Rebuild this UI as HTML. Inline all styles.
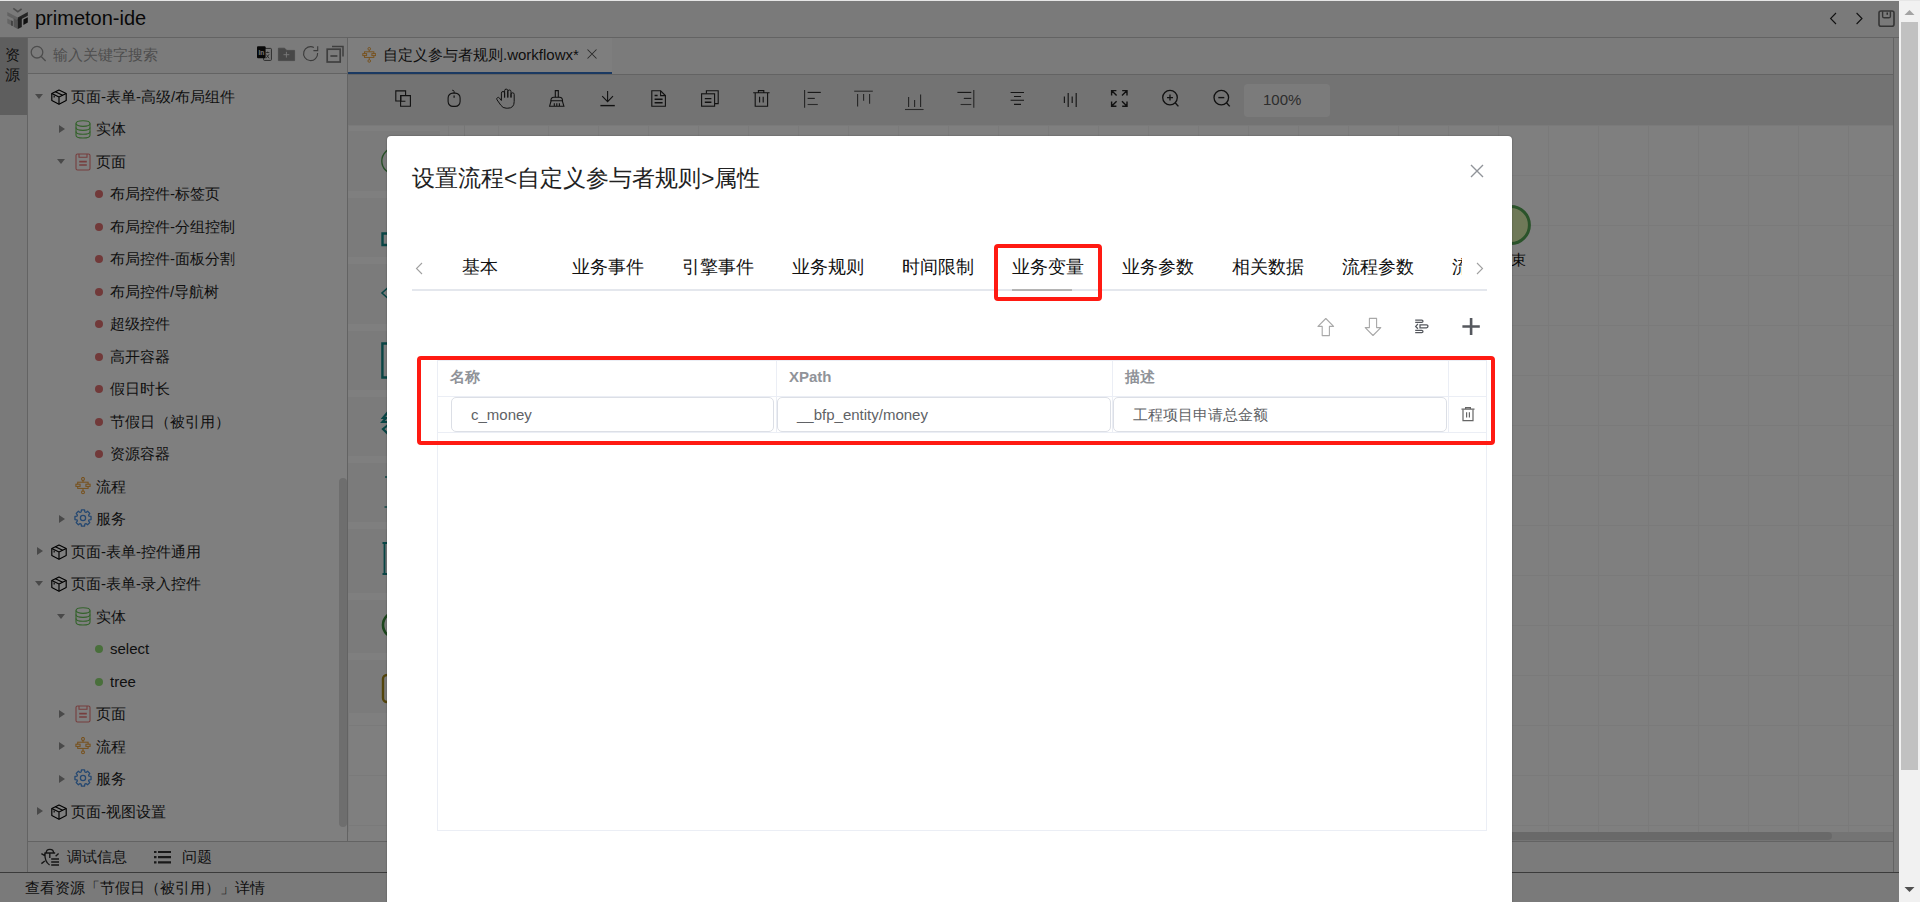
<!DOCTYPE html>
<html><head><meta charset="utf-8">
<style>
*{box-sizing:border-box}
html,body{margin:0;padding:0;width:1920px;height:902px;overflow:hidden;font-family:"Liberation Sans",sans-serif;background:#fff}
.a{position:absolute}
svg{display:block}
#app{position:absolute;left:0;top:0;width:1899px;height:902px;background:#fff;overflow:hidden}
#title{left:0;top:0;width:1899px;height:38px;background:#f4f4f4;border-bottom:1px solid #c6c6c6}
#act{left:0;top:38px;width:28px;height:834px;background:#f4f4f4;border-right:1px solid #c6c6c6}
#actsel{left:0;top:38px;width:27px;height:77px;background:#bdbdbd}
#side{left:28px;top:38px;width:320px;height:803px;background:#fff;border-right:1px solid #c6c6c6}
#search{left:28px;top:38px;width:319px;height:36px;background:#f7f7f7;border-bottom:1px solid #c6c6c6}
.tx{height:20px;font-size:15px;line-height:20px;color:#1e1e1e;white-space:nowrap}
.tri-d{width:0;height:0;border-left:4.5px solid transparent;border-right:4.5px solid transparent;border-top:5.5px solid #939393}
.tri-r{width:0;height:0;border-top:4.5px solid transparent;border-bottom:4.5px solid transparent;border-left:6.5px solid #939393}
.dot{width:8px;height:8px;border-radius:50%}
#sthumb{left:339px;top:478px;width:8px;height:349px;border-radius:4px;background:#dcdcdc}
#bottom{left:28px;top:841px;width:1865px;height:31px;background:#f6f6f6;border-top:1px solid #c6c6c6}
#status{left:0;top:872px;width:1899px;height:30px;background:#f4f4f4;border-top:1px solid #777}
#tabs{left:348px;top:38px;width:1545px;height:36px;background:#f6f6f6}
#tab1{left:348px;top:38px;width:264px;height:36px;background:#fdfdfd;border-bottom:2px solid #3472c4}
#tb{left:348px;top:75px;width:1545px;height:50px;background:#e6e6e6}
#canvas{left:348px;top:125px;width:1545px;height:707px;background:#fff;
 background-image:linear-gradient(#f5f5f5 1px,transparent 1px),linear-gradient(90deg,#f5f5f5 1px,transparent 1px);background-size:50px 50px}
#hscroll{left:390px;top:832px;width:1503px;height:9px;background:#e8e8e8}
#hthumb{left:400px;top:832px;width:1432px;height:8px;border-radius:4px;background:#d3d3d3}
#edgeR{left:1893px;top:38px;width:6px;height:834px;background:#f4f4f4;border-left:1px solid #c6c6c6}
#overlay{left:0;top:0;width:1899px;height:902px;background:rgba(0,0,0,.5)}
#vscroll{left:1899px;top:0;width:21px;height:902px;background:#f1f1f1}
#vthumb{left:1901px;top:22px;width:17px;height:748px;background:#c1c1c1}
#topline{left:0;top:0;width:1920px;height:1px;background:#e6e6e6}
#modal{left:387px;top:136px;width:1125px;height:800px;background:#fff;border-radius:4px;box-shadow:0 0 2px rgba(0,0,0,.35)}
.mt{font-size:22.5px;line-height:30px;color:#222;font-weight:300;white-space:nowrap}
.tab{font-size:17.5px;line-height:24px;color:#111;font-weight:300;white-space:nowrap}
.th{font-size:15px;font-weight:bold;color:#909399;line-height:20px;white-space:nowrap}
.inp{height:35px;border:1px solid #dcdfe6;border-radius:5px;background:#fff;font-size:15px;color:#606266;line-height:33px;padding-left:19px;white-space:nowrap}
.redbox{border:4.5px solid #ff1a12;border-radius:4px}
</style></head><body>
<div id="app">
  <div id="title" class="a"></div>
  <svg class="a" style="left:4px;top:5px" width="28" height="27" viewBox="4 5 28 27">
 <path d="M13.3 8.4L17.8 11.8L21.6 8.8" fill="none" stroke="#9a9a9a" stroke-width="1.7"/>
 <path d="M7.3 12L17.8 17.4V21L7.3 15.7Z" fill="#c4c4c4"/>
 <path d="M13.6 18.2L17.8 20.4V29L13.6 26.8Z" fill="#a8a8a8"/>
 <path d="M7.3 18.4L12.4 21V25.9L7.3 23.3Z" fill="#cacaca"/>
 <path d="M11.4 20.5L12.6 21.1V26L11.4 25.4Z" fill="#555"/>
 <path d="M17.8 17.4L27.8 12V15.7L17.8 21Z" fill="#4a4a4a"/>
 <path d="M17.8 19L21.8 17V27L17.8 29Z" fill="#3a3a3a"/>
 <path d="M23.4 19.6L27.8 17.3V22.6L23.4 24.9Z" fill="#1e1e1e"/>
</svg>
<div class="a" style="left:35px;top:6px;font-size:20px;line-height:24px;color:#111">primeton-ide</div>
<svg class="a" style="left:1829px;top:12px" width="9" height="13" viewBox="0 0 9 13"><path d="M7 1L1.6 6.5L7 12" fill="none" stroke="#222" stroke-width="1.1"/></svg>
<svg class="a" style="left:1855px;top:12px" width="9" height="13" viewBox="0 0 9 13"><path d="M1.6 1L7 6.5L1.6 12" fill="none" stroke="#222" stroke-width="1.1"/></svg>
<svg class="a" style="left:1877px;top:9px" width="19" height="19" viewBox="0 0 19 19"><rect x="2" y="2" width="15" height="15.2" rx="2" fill="none" stroke="#6a6a6a" stroke-width="1.6"/><path d="M5.6 2.2V7.2Q5.6 8.8 7.2 8.8H11.8Q13.4 8.8 13.4 7.2V2.2" fill="none" stroke="#6a6a6a" stroke-width="1.4"/><path d="M10.2 3.6V5.8" stroke="#333" stroke-width="1.2"/></svg>

  <div id="act" class="a"></div>
  <div id="actsel" class="a"></div>
  <div class="a tx" style="left:5px;top:45px;width:16px;line-height:20px;white-space:normal">资源</div>
  <div id="side" class="a"></div>
  <div id="search" class="a"></div>
  <svg class="a" style="left:30px;top:45px" width="17" height="18" viewBox="0 0 17 18"><circle cx="7" cy="7.2" r="5.8" fill="none" stroke="#9a9a9a" stroke-width="1.3"/><path d="M11.2 11.6L15.6 16" stroke="#9a9a9a" stroke-width="1.4"/></svg>
<div class="a tx" style="left:53px;top:45px;color:#9d9d9d">输入关键字搜索</div>
<svg class="a" style="left:252px;top:42px" width="96" height="24" viewBox="252 42 96 24" fill="none">
 <rect x="263.6" y="48.4" width="7.8" height="12" rx="0.8" fill="#f2f2f2" stroke="#555" stroke-width="1"/>
 <path d="M265.8 52.6H269.4M267.6 51.6V53M266 58.4L269.2 54.2M266.4 54.6L269.2 58.4" stroke="#555" stroke-width="0.9"/>
 <rect x="257" y="46.2" width="8.6" height="12" rx="1" fill="#111"/>
 <text x="258.4" y="55.2" font-size="6.6" font-weight="bold" fill="#e8e8e8" font-family="Liberation Sans">In</text>
 <path d="M278.4 48.2H284.6L286.8 50.4H294.6V60.6H278.4Z" fill="#8e8e8e" stroke="#8e8e8e" stroke-width="0.8" stroke-linejoin="round"/>
 <path d="M286.4 51.8V57.6M283.5 54.7H289.3" stroke="#f4f4f4" stroke-width="0.9"/>
 <path d="M317.6 53A7 7 0 1 1 313.9 47.4" stroke="#777" stroke-width="1.15"/>
 <path d="M317.7 46.2V50.6H313.4" stroke="#777" stroke-width="1.15"/>
 <rect x="327.2" y="49.2" width="13" height="12.8" stroke="#7e7e7e" stroke-width="1.7"/>
 <path d="M332 46.4H343V56.4" stroke="#7e7e7e" stroke-width="1.5"/>
 <path d="M330.4 56H337.4" stroke="#7e7e7e" stroke-width="1.7"/>
</svg>

  <div class="a tri-d" style="left:35px;top:93.5px"></div>
<div class="a" style="left:51px;top:88.5px;height:16px;line-height:0"><svg width="16" height="16" viewBox="0 0 16 16" fill="none" stroke="#000" stroke-width="1.15" stroke-linejoin="round"><path d="M8 1L15.2 4.5V11.6L8 15.2L0.8 11.6V4.5Z"/><path d="M0.8 4.5L8 8L15.2 4.5M8 8V15.2"/><path d="M4.4 2.7L11.6 6.3"/><path d="M3.2 6.6V8.6" stroke="#333" stroke-width="1.4"/></svg></div>
<div class="a tx" style="left:71px;top:86.5px">页面-表单-高级/布局组件</div>
<div class="a tri-r" style="left:59.0px;top:124.5px"></div>
<div class="a" style="left:75px;top:119.5px;height:19px;line-height:0"><svg width="16" height="19" viewBox="0 0 16 19" fill="none" stroke="#66c455" stroke-width="1.1"><ellipse cx="8" cy="3.6" rx="7" ry="2.8"/><path d="M1 3.6V15.2C1 16.8 4.1 18 8 18S15 16.8 15 15.2V3.6"/><path d="M1 7.6C1 9.2 4.1 10.4 8 10.4S15 9.2 15 7.6M1 11.4C1 13 4.1 14.2 8 14.2S15 13 15 11.4"/></svg></div>
<div class="a tx" style="left:96px;top:119.0px">实体</div>
<div class="a tri-d" style="left:57px;top:158.5px"></div>
<div class="a" style="left:75px;top:152.5px;height:18px;line-height:0"><svg width="16" height="18" viewBox="0 0 16 18" fill="none" stroke="#ec7b7b" stroke-width="1.1"><rect x="1" y="1" width="14" height="16" rx="1.5"/><path d="M4 1V4.2H12V1"/><path d="M4.2 8.6H11.8M4.2 12H11.8" stroke-width="1.6"/></svg></div>
<div class="a tx" style="left:96px;top:151.5px">页面</div>
<div class="a dot" style="left:95px;top:190.0px;background:#e27272"></div>
<div class="a tx" style="left:110px;top:184.0px">布局控件-标签页</div>
<div class="a dot" style="left:95px;top:222.5px;background:#e27272"></div>
<div class="a tx" style="left:110px;top:216.5px">布局控件-分组控制</div>
<div class="a dot" style="left:95px;top:255.0px;background:#e27272"></div>
<div class="a tx" style="left:110px;top:249.0px">布局控件-面板分割</div>
<div class="a dot" style="left:95px;top:287.5px;background:#e27272"></div>
<div class="a tx" style="left:110px;top:281.5px">布局控件/导航树</div>
<div class="a dot" style="left:95px;top:320.0px;background:#e27272"></div>
<div class="a tx" style="left:110px;top:314.0px">超级控件</div>
<div class="a dot" style="left:95px;top:352.5px;background:#e27272"></div>
<div class="a tx" style="left:110px;top:346.5px">高开容器</div>
<div class="a dot" style="left:95px;top:385.0px;background:#e27272"></div>
<div class="a tx" style="left:110px;top:379.0px">假日时长</div>
<div class="a dot" style="left:95px;top:417.5px;background:#e27272"></div>
<div class="a tx" style="left:110px;top:411.5px">节假日（被引用）</div>
<div class="a dot" style="left:95px;top:450.0px;background:#e27272"></div>
<div class="a tx" style="left:110px;top:444.0px">资源容器</div>
<div class="a" style="left:75px;top:476.5px;height:18px;line-height:0"><svg width="16" height="18" viewBox="0 0 16 18" fill="none" stroke="#eea23a" stroke-width="1.05"><circle cx="8" cy="1.9" r="1.45"/><circle cx="8" cy="15.3" r="1.45"/><path d="M8 3.35V5.2M8 11.4V13.85"/><rect x="2.7" y="5.2" width="10.4" height="6.2"/><rect x="0.9" y="7.2" width="4.2" height="2.2" fill="#fff"/><rect x="10.9" y="7.2" width="4.2" height="2.2" fill="#fff"/></svg></div>
<div class="a tx" style="left:96px;top:476.5px">流程</div>
<div class="a tri-r" style="left:59.0px;top:514.5px"></div>
<div class="a" style="left:74px;top:509.0px;height:18px;line-height:0"><svg width="18" height="18" viewBox="0 0 18 18" fill="none" stroke="#4a90e2" stroke-width="1.3" stroke-linejoin="round"><path d="M15.02 7.16 L17.05 7.44 L17.05 10.56 L15.02 10.84 L14.56 11.96 L15.80 13.59 L13.59 15.80 L11.96 14.56 L10.84 15.02 L10.56 17.05 L7.44 17.05 L7.16 15.02 L6.04 14.56 L4.41 15.80 L2.20 13.59 L3.44 11.96 L2.98 10.84 L0.95 10.56 L0.95 7.44 L2.98 7.16 L3.44 6.04 L2.20 4.41 L4.41 2.20 L6.04 3.44 L7.16 2.98 L7.44 0.95 L10.56 0.95 L10.84 2.98 L11.96 3.44 L13.59 2.20 L15.80 4.41 L14.56 6.04Z"/><circle cx="9" cy="9" r="2.6"/></svg></div>
<div class="a tx" style="left:96px;top:509.0px">服务</div>
<div class="a tri-r" style="left:36.5px;top:547.0px"></div>
<div class="a" style="left:51px;top:543.5px;height:16px;line-height:0"><svg width="16" height="16" viewBox="0 0 16 16" fill="none" stroke="#000" stroke-width="1.15" stroke-linejoin="round"><path d="M8 1L15.2 4.5V11.6L8 15.2L0.8 11.6V4.5Z"/><path d="M0.8 4.5L8 8L15.2 4.5M8 8V15.2"/><path d="M4.4 2.7L11.6 6.3"/><path d="M3.2 6.6V8.6" stroke="#333" stroke-width="1.4"/></svg></div>
<div class="a tx" style="left:71px;top:541.5px">页面-表单-控件通用</div>
<div class="a tri-d" style="left:35px;top:581.0px"></div>
<div class="a" style="left:51px;top:576.0px;height:16px;line-height:0"><svg width="16" height="16" viewBox="0 0 16 16" fill="none" stroke="#000" stroke-width="1.15" stroke-linejoin="round"><path d="M8 1L15.2 4.5V11.6L8 15.2L0.8 11.6V4.5Z"/><path d="M0.8 4.5L8 8L15.2 4.5M8 8V15.2"/><path d="M4.4 2.7L11.6 6.3"/><path d="M3.2 6.6V8.6" stroke="#333" stroke-width="1.4"/></svg></div>
<div class="a tx" style="left:71px;top:574.0px">页面-表单-录入控件</div>
<div class="a tri-d" style="left:57px;top:613.5px"></div>
<div class="a" style="left:75px;top:607.0px;height:19px;line-height:0"><svg width="16" height="19" viewBox="0 0 16 19" fill="none" stroke="#66c455" stroke-width="1.1"><ellipse cx="8" cy="3.6" rx="7" ry="2.8"/><path d="M1 3.6V15.2C1 16.8 4.1 18 8 18S15 16.8 15 15.2V3.6"/><path d="M1 7.6C1 9.2 4.1 10.4 8 10.4S15 9.2 15 7.6M1 11.4C1 13 4.1 14.2 8 14.2S15 13 15 11.4"/></svg></div>
<div class="a tx" style="left:96px;top:606.5px">实体</div>
<div class="a dot" style="left:95px;top:645.0px;background:#92de76"></div>
<div class="a tx" style="left:110px;top:639.0px">select</div>
<div class="a dot" style="left:95px;top:677.5px;background:#92de76"></div>
<div class="a tx" style="left:110px;top:671.5px">tree</div>
<div class="a tri-r" style="left:59.0px;top:709.5px"></div>
<div class="a" style="left:75px;top:705.0px;height:18px;line-height:0"><svg width="16" height="18" viewBox="0 0 16 18" fill="none" stroke="#ec7b7b" stroke-width="1.1"><rect x="1" y="1" width="14" height="16" rx="1.5"/><path d="M4 1V4.2H12V1"/><path d="M4.2 8.6H11.8M4.2 12H11.8" stroke-width="1.6"/></svg></div>
<div class="a tx" style="left:96px;top:704.0px">页面</div>
<div class="a tri-r" style="left:59.0px;top:742.0px"></div>
<div class="a" style="left:75px;top:736.5px;height:18px;line-height:0"><svg width="16" height="18" viewBox="0 0 16 18" fill="none" stroke="#eea23a" stroke-width="1.05"><circle cx="8" cy="1.9" r="1.45"/><circle cx="8" cy="15.3" r="1.45"/><path d="M8 3.35V5.2M8 11.4V13.85"/><rect x="2.7" y="5.2" width="10.4" height="6.2"/><rect x="0.9" y="7.2" width="4.2" height="2.2" fill="#fff"/><rect x="10.9" y="7.2" width="4.2" height="2.2" fill="#fff"/></svg></div>
<div class="a tx" style="left:96px;top:736.5px">流程</div>
<div class="a tri-r" style="left:59.0px;top:774.5px"></div>
<div class="a" style="left:74px;top:769.0px;height:18px;line-height:0"><svg width="18" height="18" viewBox="0 0 18 18" fill="none" stroke="#4a90e2" stroke-width="1.3" stroke-linejoin="round"><path d="M15.02 7.16 L17.05 7.44 L17.05 10.56 L15.02 10.84 L14.56 11.96 L15.80 13.59 L13.59 15.80 L11.96 14.56 L10.84 15.02 L10.56 17.05 L7.44 17.05 L7.16 15.02 L6.04 14.56 L4.41 15.80 L2.20 13.59 L3.44 11.96 L2.98 10.84 L0.95 10.56 L0.95 7.44 L2.98 7.16 L3.44 6.04 L2.20 4.41 L4.41 2.20 L6.04 3.44 L7.16 2.98 L7.44 0.95 L10.56 0.95 L10.84 2.98 L11.96 3.44 L13.59 2.20 L15.80 4.41 L14.56 6.04Z"/><circle cx="9" cy="9" r="2.6"/></svg></div>
<div class="a tx" style="left:96px;top:769.0px">服务</div>
<div class="a tri-r" style="left:36.5px;top:807.0px"></div>
<div class="a" style="left:51px;top:803.5px;height:16px;line-height:0"><svg width="16" height="16" viewBox="0 0 16 16" fill="none" stroke="#000" stroke-width="1.15" stroke-linejoin="round"><path d="M8 1L15.2 4.5V11.6L8 15.2L0.8 11.6V4.5Z"/><path d="M0.8 4.5L8 8L15.2 4.5M8 8V15.2"/><path d="M4.4 2.7L11.6 6.3"/><path d="M3.2 6.6V8.6" stroke="#333" stroke-width="1.4"/></svg></div>
<div class="a tx" style="left:71px;top:801.5px">页面-视图设置</div>
  <div id="sthumb" class="a"></div>
  <div id="tabs" class="a"></div>
  <div class="a" style="left:348px;top:74px;width:1545px;height:1px;background:#c6c6c6"></div>
  <div id="tab1" class="a"></div>
  <svg class="a" style="left:361.5px;top:46.5px" width="14.5" height="16.5" viewBox="0 0 16 18" fill="none" stroke="#eea23a" stroke-width="1.05"><circle cx="8" cy="1.9" r="1.45"/><circle cx="8" cy="15.3" r="1.45"/><path d="M8 3.35V5.2M8 11.4V13.85"/><rect x="2.7" y="5.2" width="10.4" height="6.2"/><rect x="0.9" y="7.2" width="4.2" height="2.2" fill="#fdfdfd"/><rect x="10.9" y="7.2" width="4.2" height="2.2" fill="#fdfdfd"/></svg>
<div class="a tx" style="left:383px;top:45px">自定义参与者规则.workflowx*</div>
<svg class="a" style="left:586px;top:48px" width="12" height="12" viewBox="0 0 12 12"><path d="M1.5 1.5L10.5 10.5M10.5 1.5L1.5 10.5" stroke="#555" stroke-width="1.05"/></svg>

  <div id="tb" class="a"></div>
  <svg class="a" style="left:348px;top:74px" width="1000" height="51" viewBox="348 74 1000 51" fill="none" stroke="#222" stroke-width="1.1">
 <!-- copy -->
 <path d="M400.6 101H395.8V90.9H405.6V95.6"/>
 <path d="M400.6 95.6H410.4V106.2H400.6Z"/>
 <path d="M400.9 95.8V101.2H405.4"/>
 <!-- mouse -->
 <rect x="448.1" y="93.1" width="12" height="13.3" rx="4.8"/>
 <path d="M454.1 93.1V91.6Q454.1 90.2 452.2 90.2" stroke-width="1"/>
 <path d="M454.1 95.4V97.8" stroke-width="1.2"/>
 <!-- hand -->
 <path d="M501.4 100.4V93.1A1.6 1.6 0 0 1 504.6 93.1V97.5M504.6 97.5V90.7A1.6 1.6 0 0 1 507.8 90.7V97.5M507.8 97.5V91.6A1.6 1.6 0 0 1 511 91.6V97.5M511 97.5V94.4A1.6 1.6 0 0 1 514.2 94.4V101.4Q514.2 108.2 507.8 108.2H506.2Q502.8 108.2 500.8 105.2L497 99.8A1.5 1.5 0 0 1 499.5 98.1L501.4 100.6" stroke-width="1"/>
 <!-- broom -->
 <path d="M555.3 97.2V90.6H558.3V97.2" stroke-width="1.1"/>
 <path d="M550.9 100.7Q550.9 97.3 553.9 97.3H559.5Q562.5 97.3 562.5 100.7Z" stroke-width="1.1"/>
 <path d="M551.1 100.8L549.6 106.2H563.9L562.3 100.8M554.3 106V103.3M556.8 106V103.3M559.4 106V103.3" stroke-width="1.1"/>
 <!-- download -->
 <path d="M607.6 91V101.6M602.2 96.2L607.6 101.6L613 96.2"/>
 <path d="M600.4 105.6H614.8" stroke-width="1.4"/>
 <!-- doc -->
 <path d="M651.8 90.8H660.6L665.4 95.6V106.2H651.8Z"/>
 <path d="M660.6 90.8V95.6H665.4" stroke-width="1.1"/>
 <path d="M654.6 95.4H657.6M654.6 99.2H662.6M654.6 102.8H662.6" stroke-width="1.5"/>
 <!-- copy2 -->
 <path d="M706.4 93.4V90.8H718.2V103.6H715"/>
 <rect x="701.6" y="93.8" width="13" height="12.4"/>
 <path d="M704.8 98.6H711.4M704.8 102.2H711.4" stroke-width="1.4"/>
 <!-- trash -->
 <path d="M753.2 92.8H769.6M758.4 92.6V90.6H763.8V92.6"/>
 <path d="M755.2 93V106.2H767.6V93"/>
 <path d="M759.6 96.8V102.6M763.2 96.8V102.6"/>
 <!-- align left -->
 <g stroke-width="1.1">
 <path d="M804.6 90V107.8" stroke="#4a4a4a"/>
 <path d="M807.6 92.4H820.8" stroke="#2a2a2a"/>
 <path d="M807.6 98.4H814.8" stroke="#3a3a3a"/>
 <path d="M807.6 104.5H817.8" stroke="#555"/>
 <!-- align top -->
 <path d="M854.2 91.2H872.8" stroke="#555"/>
 <path d="M857.6 94V106.6M863.6 94V100.8M869.6 94V103.8" stroke="#4a4a4a"/>
 <!-- align bottom -->
 <path d="M905 109.5H923.6" stroke="#555"/>
 <path d="M908.6 97V107M914.6 100V107M920.6 94.4V107" stroke="#4a4a4a"/>
 <!-- align right -->
 <path d="M973.8 90V107.8" stroke="#4a4a4a"/>
 <path d="M957.4 92.4H971.3" stroke="#2a2a2a"/>
 <path d="M963.8 98.4H971.3" stroke="#3a3a3a"/>
 <path d="M960.6 104.5H971.3" stroke="#555"/>
 <!-- center h -->
 <path d="M1010.6 92.5H1024M1014 96.5H1021M1010.6 100.3H1024M1014 104.4H1021" stroke="#2a2a2a"/>
 <!-- distribute -->
 <path d="M1064.4 96.5V103M1068.2 93V107M1072.2 96.5V103M1076.2 93V107" stroke="#333" stroke-width="1.2"/>
 </g>
 <!-- fullscreen -->
 <path d="M1111.6 95.4V90.6H1116.4M1111.8 90.8L1116.6 95.6M1127 95.4V90.6H1122.2M1126.8 90.8L1122 95.6M1111.6 101.4V106.2H1116.4M1111.8 106L1116.6 101.2M1127 101.4V106.2H1122.2M1126.8 106L1122 101.2" stroke-width="1.4"/>
 <!-- zoom in -->
 <circle cx="1170" cy="97.6" r="7.3" stroke-width="1.3"/>
 <path d="M1175.2 102.8L1178.4 106.4" stroke-width="1.4"/>
 <path d="M1167 97.6H1173M1170 94.6V100.6" stroke-width="1.3"/>
 <circle cx="1221.3" cy="97.6" r="7.3" stroke-width="1.3"/>
 <path d="M1226.5 102.8L1229.7 106.4" stroke-width="1.4"/>
 <path d="M1218.3 97.6H1224.3" stroke-width="1.4"/>
</svg>
<div class="a" style="left:1244px;top:84px;width:86px;height:33px;border-radius:4px;background:#f7f7f7"></div>
<div class="a" style="left:1263px;top:90px;font-size:15px;line-height:20px;color:#5a5a5a">100%</div>

  <div id="canvas" class="a"></div>
  <div class="a" style="left:349px;top:126px;width:98px;height:6px;background:#fff"></div>
<div class="a" style="left:464px;top:125px;width:1px;height:12px;background:#ededed"></div>
<div class="a" style="left:348px;top:131px;width:92px;height:582px;background:#f6f6f6"></div>
<div class="a" style="left:348px;top:191px;width:92px;height:7px;background:#fefefe"></div>
<div class="a" style="left:348px;top:257px;width:92px;height:7px;background:#fefefe"></div>
<div class="a" style="left:348px;top:324px;width:92px;height:7px;background:#fefefe"></div>
<div class="a" style="left:348px;top:390px;width:92px;height:7px;background:#fefefe"></div>
<div class="a" style="left:348px;top:456px;width:92px;height:7px;background:#fefefe"></div>
<div class="a" style="left:348px;top:522px;width:92px;height:7px;background:#fefefe"></div>
<div class="a" style="left:348px;top:593px;width:92px;height:7px;background:#fefefe"></div>
<div class="a" style="left:348px;top:653px;width:92px;height:7px;background:#fefefe"></div>
<svg class="a" style="left:348px;top:125px" width="60" height="713" viewBox="348 125 60 713" fill="none">
 <circle cx="395" cy="161" r="13.2" stroke="#4e9e4e" stroke-width="1.4"/>
 <path d="M388 233.5H382.5V245H388" stroke="#138a8a" stroke-width="2.4"/>
 <path d="M392 284L382 293L392 302" stroke="#138a8a" stroke-width="1.6"/>
 <path d="M389 343.5H382.4V377.5H389" stroke="#138a8a" stroke-width="2.4"/>
 <path d="M388 412L383 418H386L382.5 422H388M388 425L383 429L388 434" stroke="#138a8a" stroke-width="2.2"/>
 <circle cx="386" cy="477" r="1" fill="#138a8a"/>
 <path d="M384.5 507H388" stroke="#138a8a" stroke-width="1.4"/>
 <path d="M382.5 543H387M384.5 543V574M382.5 574H387" stroke="#138a8a" stroke-width="1.8"/>
 <circle cx="396" cy="625" r="13" stroke="#3b8c3b" stroke-width="2.6"/>
 <rect x="383" y="675" width="20" height="27" rx="4" stroke="#a88a18" stroke-width="2.4"/>
</svg>
<svg class="a" style="left:1480px;top:195px" width="60" height="60" viewBox="1480 195 60 60"><circle cx="1510.8" cy="225" r="18.6" fill="#dff3b0" stroke="#55a655" stroke-width="3"/></svg>
<div class="a tx" style="left:1496px;top:250px;color:#111">结束</div>

  <div id="hscroll" class="a"></div>
  <div id="hthumb" class="a"></div>
  <div id="edgeR" class="a"></div>
  <div id="bottom" class="a"></div>
  <svg class="a" style="left:38px;top:846px" width="24" height="22" viewBox="0 0 24 22" fill="none" stroke="#2a2a2a" stroke-width="1.35"><path d="M8.2 7Q8.2 3.4 11.9 3.4Q15.6 3.4 15.6 7"/><path d="M6.4 7H17.2M7 7.4Q6.4 15.6 11.6 19M11.8 7V12M3.4 7.6L6.8 9.6M3.4 17.6L6.8 15M20.6 7.4L17.6 10.2"/><path d="M13.2 13H21M13.2 16H21M13.2 19H21" stroke-width="1.5"/></svg>
<div class="a tx" style="left:67px;top:847px">调试信息</div>
<svg class="a" style="left:153px;top:850px" width="19" height="14" viewBox="0 0 19 14" fill="none" stroke="#333" stroke-width="2.2"><path d="M1 2H3.5M1 7.2H3.5M1 12.3H3.5M5 2H18M5 7.2H18M5 12.3H18"/></svg>
<div class="a tx" style="left:182px;top:847px">问题</div>

  <div id="status" class="a"></div>
  <div class="a tx" style="left:25px;top:878px">查看资源「节假日（被引用）」详情</div>
</div>
<div id="overlay" class="a"></div>
<div id="vscroll" class="a"></div>
<div id="vthumb" class="a"></div>
<svg class="a" style="left:1903px;top:8px" width="13" height="8" viewBox="0 0 13 8"><path d="M1.5 7L6.5 2L11.5 7Z" fill="#a3a3a3"/></svg>
<svg class="a" style="left:1903px;top:886px" width="13" height="8" viewBox="0 0 13 8"><path d="M1.5 1L6.5 6L11.5 1Z" fill="#505050"/></svg>
<div id="topline" class="a"></div>
<div id="modal" class="a"></div>
<div class="a mt" style="left:412px;top:164px">设置流程&lt;自定义参与者规则&gt;属性</div>
<svg class="a" style="left:1469px;top:163px" width="16" height="16" viewBox="0 0 16 16"><path d="M2 2L14 14M14 2L2 14" stroke="#909399" stroke-width="1.4"/></svg>
<svg class="a" style="left:414px;top:261px" width="10" height="15" viewBox="0 0 10 15"><path d="M8 2L2.5 7.5L8 13" fill="none" stroke="#a0a0a0" stroke-width="1.1"/></svg>
<svg class="a" style="left:1475px;top:261px" width="10" height="15" viewBox="0 0 10 15"><path d="M2 2L7.5 7.5L2 13" fill="none" stroke="#a0a0a0" stroke-width="1.1"/></svg>
<div class="a" style="left:437px;top:240px;width:1025px;height:50px;overflow:hidden">
 <div class="a tab" style="left:25px;top:15px">基本</div>
 <div class="a tab" style="left:135px;top:15px">业务事件</div>
 <div class="a tab" style="left:245px;top:15px">引擎事件</div>
 <div class="a tab" style="left:355px;top:15px">业务规则</div>
 <div class="a tab" style="left:465px;top:15px">时间限制</div>
 <div class="a tab" style="left:575px;top:15px">业务变量</div>
 <div class="a tab" style="left:685px;top:15px">业务参数</div>
 <div class="a tab" style="left:795px;top:15px">相关数据</div>
 <div class="a tab" style="left:905px;top:15px">流程参数</div>
 <div class="a tab" style="left:1015px;top:15px">流程</div>
</div>
<div class="a" style="left:412px;top:289px;width:1075px;height:2px;background:#e4e7ed"></div>
<div class="a" style="left:1012px;top:289px;width:60px;height:2px;background:#b4b4b4"></div>
<div class="a redbox" style="left:994px;top:244px;width:108px;height:57px"></div>
<!-- toolbar -->
<svg class="a" style="left:1310px;top:310px" width="180" height="34" viewBox="1310 310 180 34" fill="none">
 <path d="M1325.8 318.5L1333.6 326.4H1329.4V335.6H1322.2V326.4H1318Z" stroke="#a8a8a8" stroke-width="1.1" stroke-linejoin="round"/>
 <path d="M1373 335.5L1380.8 327.6H1376.6V318.4H1369.4V327.6H1365.2Z" stroke="#a8a8a8" stroke-width="1.1" stroke-linejoin="round"/>
 <path d="M1415.2 320.1H1421.8A1.15 1.15 0 0 1 1421.8 322.4H1415.2M1420 324.9H1426.5A1.45 1.45 0 0 1 1426.5 327.8H1420ZM1417.9 324L1415.7 326.4L1417.9 328.8M1415.2 330.4H1421.8A1.15 1.15 0 0 1 1421.8 332.7H1415.2" stroke="#55585e" stroke-width="1.3"/>
 <path d="M1462.4 326.5H1479.8M1471.1 318V335" stroke="#55585e" stroke-width="2.6"/>
</svg>
<!-- table -->
<div class="a" style="left:437px;top:360px;width:1050px;height:471px;border:1px solid #ebeef5"></div>
<div class="a" style="left:438px;top:396px;width:1048px;height:1px;background:#ebeef5"></div>
<div class="a" style="left:438px;top:432px;width:1048px;height:1px;background:#ebeef5"></div>
<div class="a" style="left:776px;top:361px;width:1px;height:72px;background:#ebeef5"></div>
<div class="a" style="left:1112px;top:361px;width:1px;height:72px;background:#ebeef5"></div>
<div class="a" style="left:1448px;top:361px;width:1px;height:72px;background:#ebeef5"></div>
<div class="a th" style="left:450px;top:367px">名称</div>
<div class="a th" style="left:789px;top:367px">XPath</div>
<div class="a th" style="left:1125px;top:367px">描述</div>
<div class="a inp" style="left:451px;top:397px;width:323px">c_money</div>
<div class="a inp" style="left:777px;top:397px;width:334px">__bfp_entity/money</div>
<div class="a inp" style="left:1113px;top:397px;width:334px">工程项目申请总金额</div>
<svg class="a" style="left:1460px;top:406px" width="16" height="16" viewBox="0 0 16 16" fill="none" stroke="#666" stroke-width="1.2"><path d="M1.5 3.2H14.5M5.6 3V1.6H10.4V3"/><path d="M3 3.4V14.6H13V3.4"/><path d="M6.6 6.2V11.4M9.4 6.2V11.4"/></svg>
<div class="a redbox" style="left:417px;top:356px;width:1078px;height:89px"></div>

</body></html>
